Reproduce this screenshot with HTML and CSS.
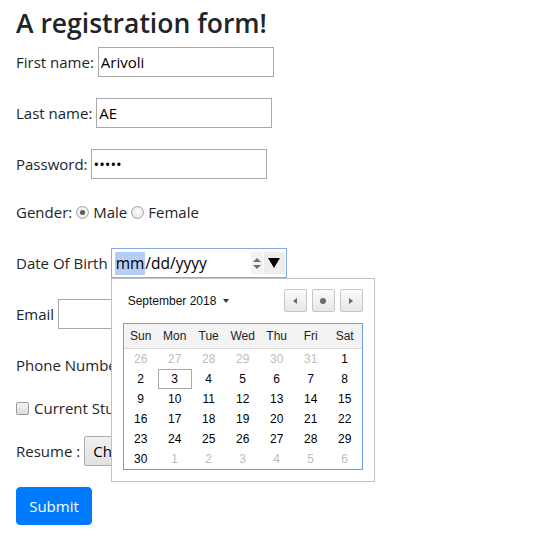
FILE: index.html
```html
<!DOCTYPE html>
<html>
<head>
<meta charset="utf-8">
<title>Registration</title>
<link rel="stylesheet" href="styles.css">
</head>
<body>
<main class="page">
  <h1 class="title">A registration form!</h1>
  <form class="form">
    <div class="row"><label class="lbl">First name:</label><input class="field" type="text" value="Arivoli"></div>
    <div class="row"><label class="lbl">Last name:</label><input class="field" type="text" value="AE"></div>
    <div class="row row-short"><label class="lbl lbl-pw">Password:</label><input class="field" type="password" value="abcde"></div>
    <div class="row">
      <span class="lbl">Gender:</span>
      <span class="radio radio-on"></span><span class="opt">Male</span>
      <span class="radio"></span><span class="opt">Female</span>
    </div>
    <div class="row">
      <label class="lbl">Date Of Birth</label>
      <div class="date">
        <div class="date-text"><span class="seg-sel">mm</span>/dd/yyyy</div>
        <div class="spin"><span class="spin-up"></span><span class="spin-down"></span></div>
        <div class="drop"><span class="drop-tri"></span></div>
        <div class="picker">
          <div class="picker-head">
            <span class="month">September 2018<span class="caret"></span></span>
            <div class="nav">
              <span class="navbtn"><span class="tri-l"></span></span>
              <span class="navbtn"><span class="dot"></span></span>
              <span class="navbtn"><span class="tri-r"></span></span>
            </div>
          </div>
          <div class="cal">
            <div class="cal-head">
              <span>Sun</span><span>Mon</span><span>Tue</span><span>Wed</span><span>Thu</span><span>Fri</span><span>Sat</span>
            </div>
            <div class="cal-body">
              <span class="other">26</span><span class="other">27</span><span class="other">28</span><span class="other">29</span><span class="other">30</span><span class="other">31</span><span>1</span>
              <span>2</span><span class="today">3</span><span>4</span><span>5</span><span>6</span><span>7</span><span>8</span>
              <span>9</span><span>10</span><span>11</span><span>12</span><span>13</span><span>14</span><span>15</span>
              <span>16</span><span>17</span><span>18</span><span>19</span><span>20</span><span>21</span><span>22</span>
              <span>23</span><span>24</span><span>25</span><span>26</span><span>27</span><span>28</span><span>29</span>
              <span>30</span><span class="other">1</span><span class="other">2</span><span class="other">3</span><span class="other">4</span><span class="other">5</span><span class="other">6</span>
            </div>
          </div>
        </div>
      </div>
    </div>
    <div class="row"><label class="lbl">Email</label><input class="field" type="text" value=""></div>
    <div class="row row-tight"><label class="lbl">Phone Number</label><input class="field" type="text" value=""></div>
    <div class="row row-tight"><span class="check"></span><span class="opt-check">Current Student</span></div>
    <div class="row"><span class="lbl">Resume :</span><span class="filebtn">Choose File</span></div>
    <button class="submit" type="button">Submit</button>
  </form>
</main>
</body>
</html>
```

FILE: styles.css
```css
html, body {
  margin: 0;
  padding: 0;
  background: #fff;
}

.page {
  padding: 5px 16px 0;
  font-family: "Open Sans", "Noto Sans", sans-serif;
  font-size: 15px;
  color: #212529;
}

.title {
  margin: 0 0 6px;
  font-size: 26.5px;
  line-height: 36px;
  font-weight: 600;
  color: #212529;
}

.form {
  margin: 0;
}

.row {
  display: flex;
  align-items: center;
  height: 30px;
  margin-bottom: 21px;
  white-space: nowrap;
}

.row-short {
  margin-bottom: 18px;
}

.row-tight {
  margin-bottom: 13px;
}

.lbl {
  margin-right: 4px;
}

.lbl-pw {
  margin-right: 3px;
}

.field {
  box-sizing: border-box;
  width: 176px;
  height: 30px;
  border: 1px solid #a9a9a9;
  padding: 1px 2px;
  font-family: "Open Sans", "Noto Sans", sans-serif;
  font-size: 15px;
  color: #000;
  background: #fff;
  outline: none;
  flex: none;
}

/* radios */
.radio {
  box-sizing: border-box;
  width: 13px;
  height: 13px;
  border-radius: 50%;
  border: 1px solid #a3a3a3;
  background: radial-gradient(circle at 50% 40%, #fbfbfb, #e2e2e2);
  margin: 0 4px 0 0;
  display: inline-flex;
  align-items: center;
  justify-content: center;
  flex: none;
}

.radio-on::after {
  content: "";
  width: 5px;
  height: 5px;
  border-radius: 50%;
  background: #5c5c5c;
}

.opt {
  margin-right: 4px;
}

/* date input */
.date {
  position: relative;
  box-sizing: border-box;
  width: 176px;
  height: 30px;
  border: 1px solid #86aee6;
  padding: 2px 1px 2px 3px;
  display: flex;
  align-items: center;
  margin-left: -1px;
  font-family: "Open Sans", "Noto Sans", sans-serif;
  font-size: 15.5px;
  color: #000;
  flex: none;
}

.date-text {
  flex: 1;
  display: flex;
  align-items: center;
}

.seg-sel {
  background: #b4cff3;
  height: 23px;
  line-height: 23px;
  padding: 0 1px;
}

.spin {
  width: 12px;
  height: 22px;
  background: #f2f2f2;
  display: flex;
  flex-direction: column;
  align-items: center;
  justify-content: center;
  gap: 3px;
}

.spin-up {
  width: 0;
  height: 0;
  border-left: 4px solid transparent;
  border-right: 4px solid transparent;
  border-bottom: 4px solid #6e6e6e;
}

.spin-down {
  width: 0;
  height: 0;
  border-left: 4px solid transparent;
  border-right: 4px solid transparent;
  border-top: 4px solid #6e6e6e;
}

.drop {
  width: 21px;
  height: 22px;
  margin-left: 1px;
  background: #ededed;
  display: flex;
  align-items: center;
  justify-content: center;
}

.drop-tri {
  width: 0;
  height: 0;
  border-left: 6px solid transparent;
  border-right: 6px solid transparent;
  border-top: 10px solid #000;
}

/* picker popup */
.picker {
  position: absolute;
  left: -1px;
  top: calc(100% + 1px);
  z-index: 10;
  box-sizing: border-box;
  width: 264px;
  border: 1px solid #c2c2c2;
  background: #fff;
  padding: 10px 11px 11px;
  font-family: "Liberation Sans", Arial, sans-serif;
  font-size: 12px;
  color: #000;
}

.picker-head {
  display: flex;
  align-items: center;
  justify-content: space-between;
  height: 23px;
  margin-bottom: 11px;
}

.month {
  display: flex;
  align-items: center;
  padding-left: 5px;
  color: #111;
}

.caret {
  width: 0;
  height: 0;
  margin-left: 7px;
  border-left: 3.5px solid transparent;
  border-right: 3.5px solid transparent;
  border-top: 4px solid #333;
}

.nav {
  display: flex;
  gap: 5px;
}

.navbtn {
  box-sizing: border-box;
  width: 23px;
  height: 23px;
  border: 1px solid #c6c6c6;
  border-radius: 2px;
  background: linear-gradient(#fbfbfb, #e6e6e6);
  display: flex;
  align-items: center;
  justify-content: center;
}

.tri-l {
  width: 0;
  height: 0;
  border-top: 3.5px solid transparent;
  border-bottom: 3.5px solid transparent;
  border-right: 4px solid #6a6a6a;
}

.tri-r {
  width: 0;
  height: 0;
  border-top: 3.5px solid transparent;
  border-bottom: 3.5px solid transparent;
  border-left: 4px solid #6a6a6a;
}

.dot {
  width: 6px;
  height: 6px;
  border-radius: 50%;
  background: #6a6a6a;
}

.cal {
  border: 1px solid #6f9ee8;
}

.cal-head {
  display: grid;
  grid-template-columns: repeat(7, 34px);
  height: 24px;
  background: #f3f3f3;
  border-bottom: 1px solid #dadada;
  align-items: center;
  text-align: center;
  color: #222;
}

.cal-body {
  display: grid;
  grid-template-columns: repeat(7, 34px);
  grid-auto-rows: 20px;
  text-align: center;
}

.cal-body span {
  box-sizing: border-box;
  line-height: 20px;
}

.cal-body .other {
  color: #bdbdbd;
}

.cal-body .today {
  border: 1px solid #a9a9a9;
  line-height: 18px;
}

/* checkbox */
.check {
  box-sizing: border-box;
  width: 13px;
  height: 13px;
  border: 1px solid #9a9a9a;
  border-radius: 2px;
  background: linear-gradient(#f5f5f5, #dcdcdc);
  margin-right: 5px;
  flex: none;
}

/* file input */
.filebtn {
  box-sizing: border-box;
  height: 30px;
  line-height: 28px;
  padding: 0 8px;
  border: 1px solid #adadad;
  border-radius: 2px;
  background: linear-gradient(#f0f0f0, #e1e1e1);
  color: #000;
}

/* submit */
.submit {
  display: block;
  box-sizing: border-box;
  width: 76px;
  height: 38px;
  padding: 0;
  border: 1px solid #007bff;
  border-radius: 4px;
  background: #007bff;
  color: #fff;
  font-family: "Open Sans", "Noto Sans", sans-serif;
  font-size: 15px;
  cursor: pointer;
}
```
